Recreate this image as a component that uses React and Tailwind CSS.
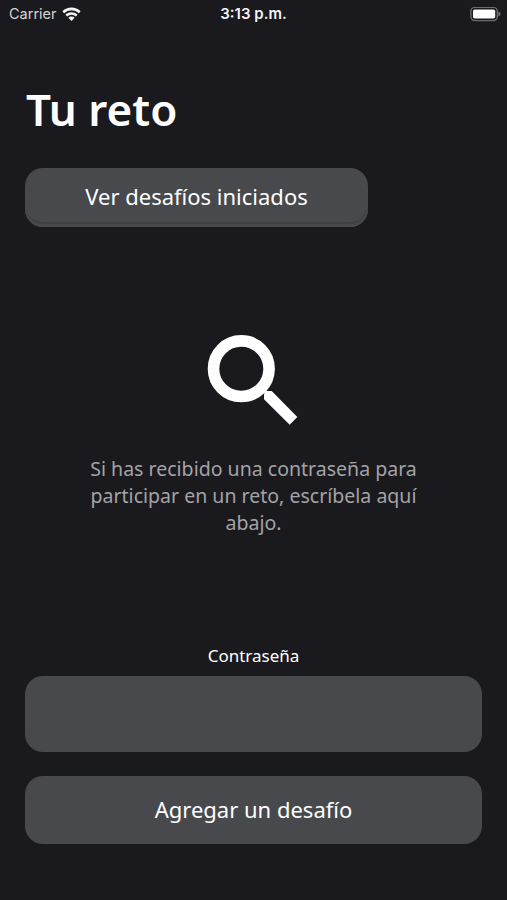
import React from 'react';

const WifiIcon = () => (
  <svg width="19" height="15" viewBox="0 0 19 15" fill="#f4f4f5" aria-hidden="true">
    <path d="M0.4 4.2a13 13 0 0 1 18.2 0l-1.7 2a10.6 10.6 0 0 0-14.8 0z" />
    <path d="M3.4 7.6a8.8 8.8 0 0 1 12.2 0l-1.7 1.9a6.3 6.3 0 0 0-8.8 0z" />
    <path d="M6.4 10.8a4.4 4.4 0 0 1 6.2 0l-3.1 3.2z" />
  </svg>
);

const BatteryIcon = () => (
  <svg width="31" height="15" viewBox="0 0 31 15" aria-hidden="true">
    <rect x="0.9" y="0.4" width="26.4" height="13.2" rx="4" fill="none" stroke="#6b6b6f" strokeWidth="1.4" />
    <rect x="3" y="2.4" width="22.2" height="9.2" rx="1.8" fill="#ffffff" />
    <path d="M28.4 4.6c1.6.4 2.2 1.4 2.2 2.4s-.6 2-2.2 2.4z" fill="#6b6b6f" />
  </svg>
);

const SearchIcon = () => (
  <svg width="92" height="92" viewBox="0 0 92 92" aria-hidden="true">
    <circle cx="34.3" cy="34.7" r="27.8" fill="none" stroke="#ffffff" strokeWidth="11.6" />
    <path d="M58 56l2.3 1h4.4L90.3 83l-7.6 7.8L57 65.3v-4.3z" fill="#ffffff" />
  </svg>
);

const StatusBar = () => (
  <header className="grid h-7 grid-cols-3 items-center pl-[9px] pr-[6px] font-['Inter','Liberation_Sans',sans-serif] text-[14.5px] leading-7 text-zinc-100">
    <div className="flex items-center gap-[5px]">
      <span className="text-[#d4d4d6]">Carrier</span>
      <WifiIcon />
    </div>
    <span className="pr-[3px] text-center text-[15px] font-semibold">3:13 p.m.</span>
    <div className="flex justify-end">
      <BatteryIcon />
    </div>
  </header>
);

const App = () => (
  <div className="flex h-[900px] w-[507px] flex-col overflow-hidden bg-[#1a191e] font-['Noto_Sans','Open_Sans',sans-serif] text-white">
    <StatusBar />
    <main className="flex flex-1 flex-col px-[25px]">
      <h1 className="mt-[51px] pl-px text-[44px] font-semibold leading-[60px]">Tu reto</h1>
      <button
        type="button"
        className="mt-[29px] h-[59px] w-[343px] rounded-[18px] bg-[#48494d] pb-0.5 text-[22px] shadow-[inset_0_-3px_0_#48494d,inset_0_-5px_0_#3f4045]"
      >
        Ver desafíos iniciados
      </button>
      <section className="mt-[107px] flex flex-col items-center">
        <div className="pr-0.5">
          <SearchIcon />
        </div>
        <p className="mt-[29px] w-[340px] text-center text-[19.55px] leading-[27px] text-[#a3a3a5]">
          Si has recibido una contraseña para participar en un reto, escríbela aquí abajo.
        </p>
      </section>
      <form className="mt-[108px] flex flex-col">
        <label htmlFor="password" className="text-center text-[17px] leading-6">
          Contraseña
        </label>
        <input id="password" type="text" className="mt-2 h-[76px] rounded-[18px] bg-[#48494d] px-5 text-[22px] outline-none" />
        <button type="button" className="mt-6 h-[68px] rounded-[18px] bg-[#48494d] pb-0.5 text-[22px]">
          Agregar un desafío
        </button>
      </form>
    </main>
  </div>
);

export default App;
